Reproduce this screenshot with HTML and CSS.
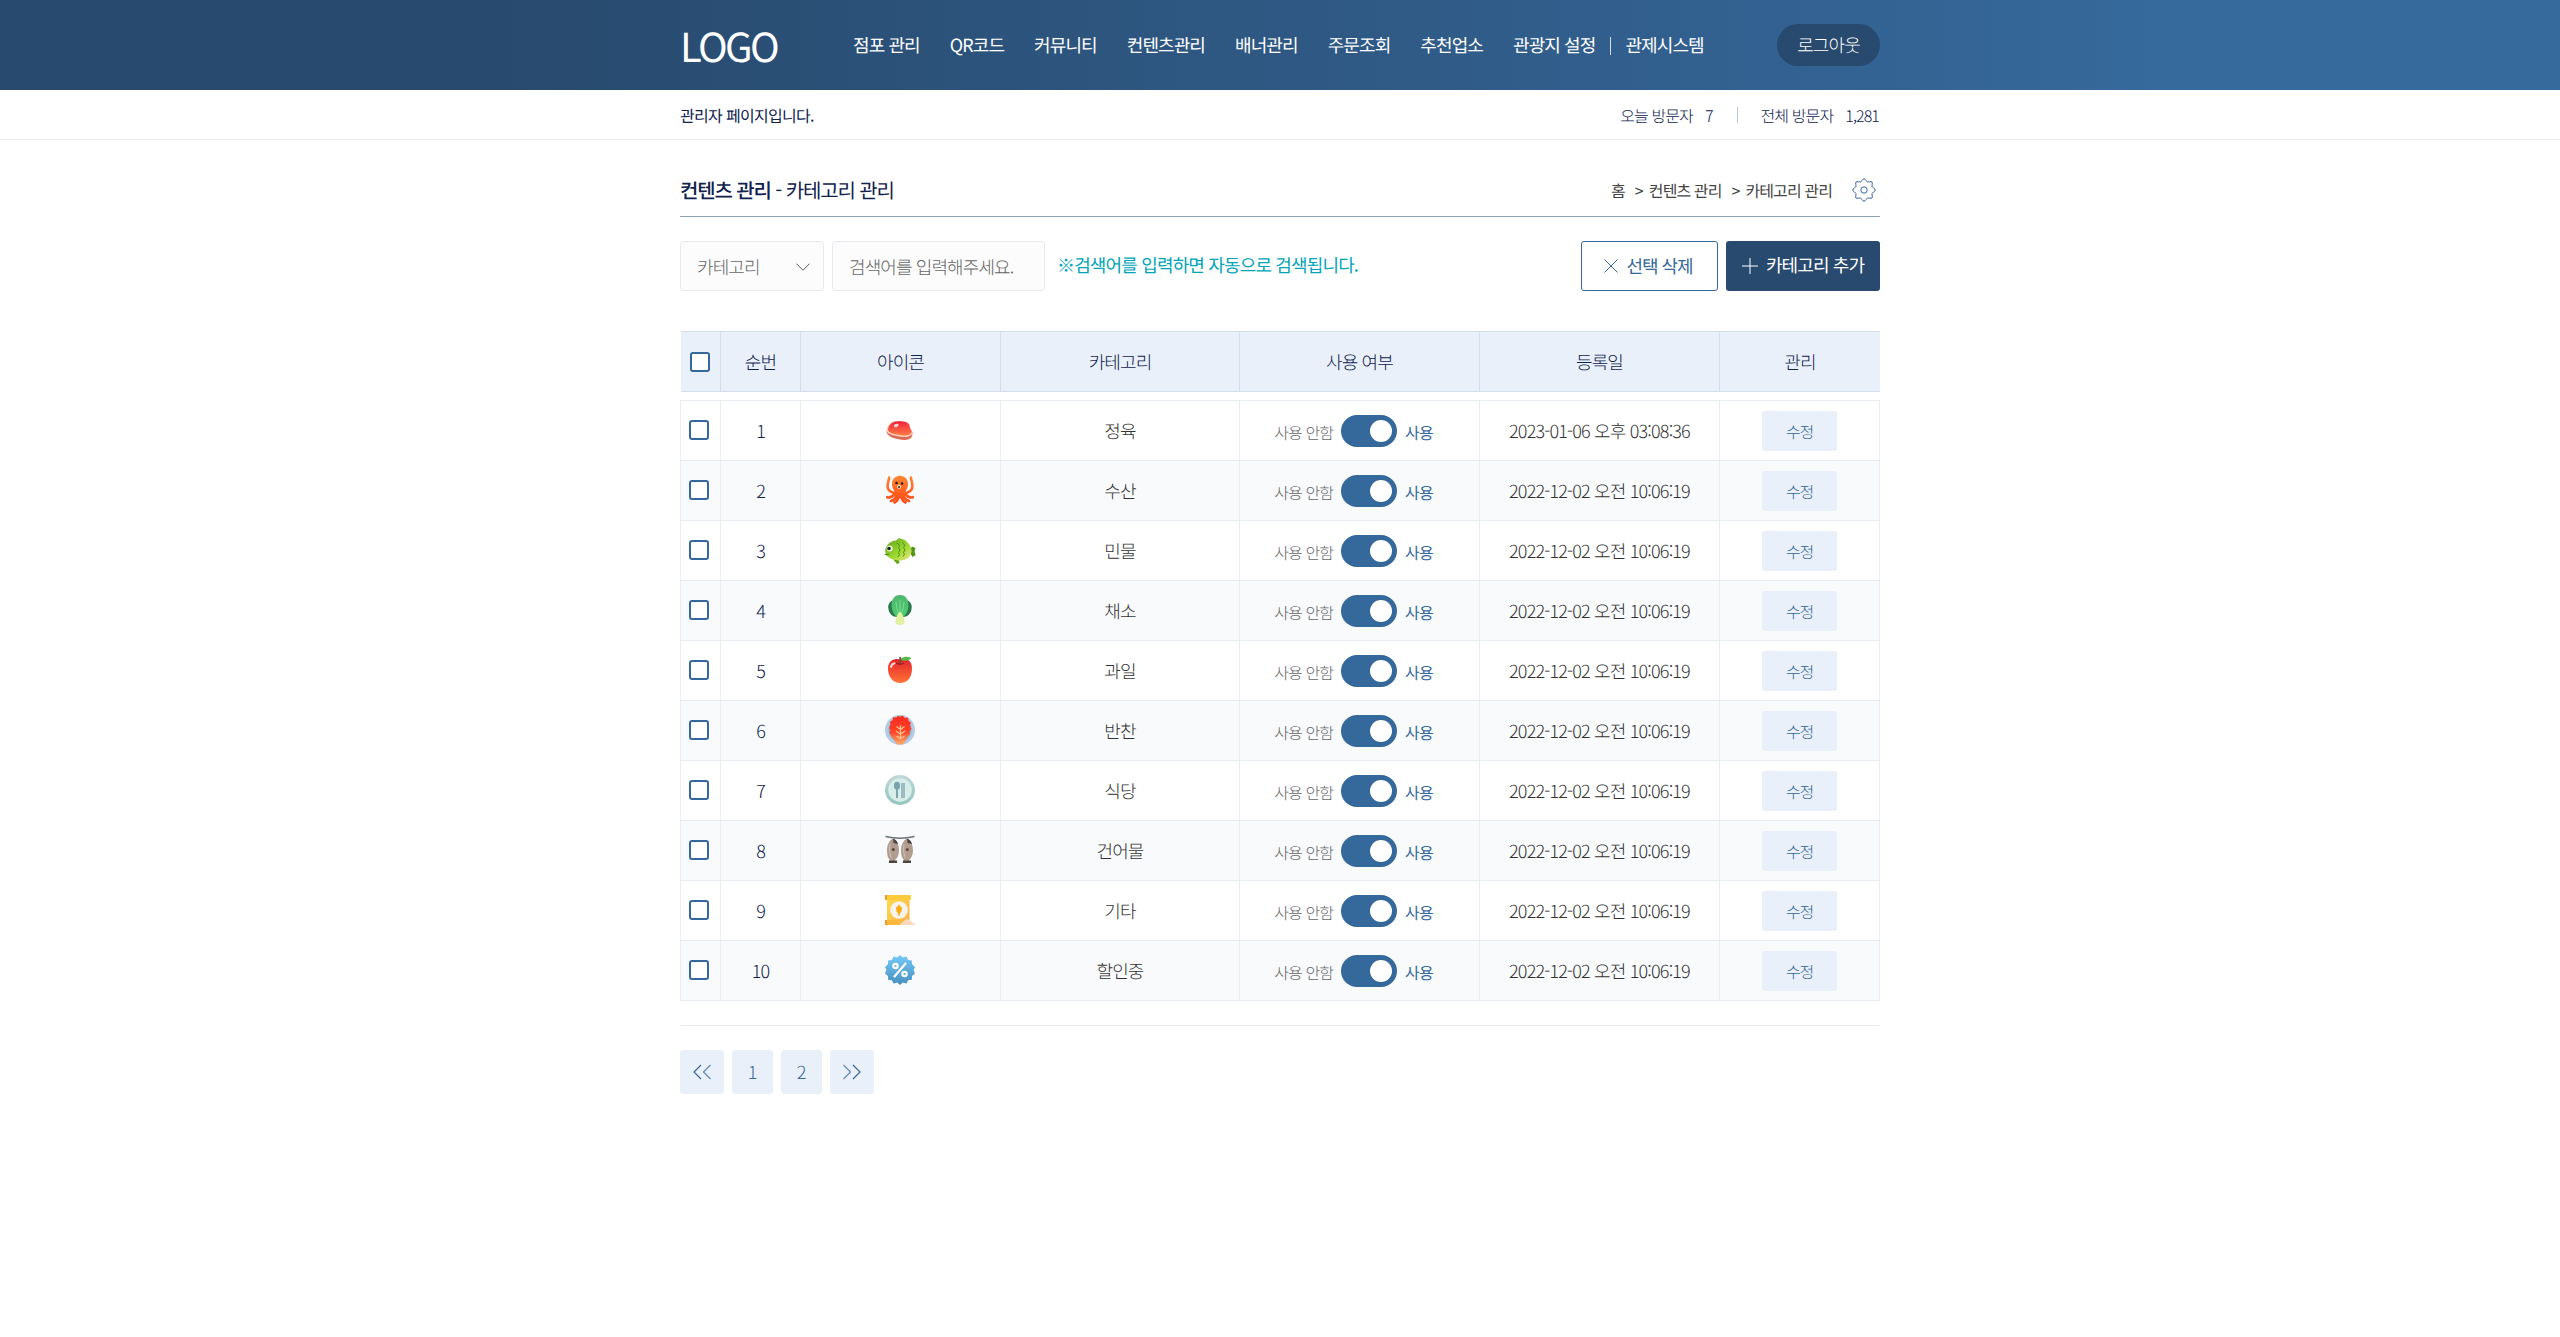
FILE: index.html
```html
<!DOCTYPE html>
<html lang="ko">
<head>
<meta charset="utf-8">
<title>카테고리 관리</title>
<link rel="stylesheet" href="styles.css">
</head>
<body>
<svg class="defs" aria-hidden="true">
  <defs>
    <linearGradient id="g-red" x1="0" y1="0" x2="0" y2="1"><stop offset="0" stop-color="#ef233c"/><stop offset="1" stop-color="#ff7a45"/></linearGradient>
    <linearGradient id="g-orange" x1="0" y1="0" x2="0" y2="30" gradientUnits="userSpaceOnUse"><stop offset="0" stop-color="#ff8a35"/><stop offset="1" stop-color="#ff4312"/></linearGradient>
    <linearGradient id="g-lime" x1="0" y1="0" x2="1" y2="1"><stop offset="0" stop-color="#5c9d18"/><stop offset=".6" stop-color="#9edb32"/><stop offset="1" stop-color="#f5e58a"/></linearGradient>
    <linearGradient id="g-green" x1="0" y1="0" x2="0" y2="1"><stop offset="0" stop-color="#4eb86e"/><stop offset="1" stop-color="#52cb72"/></linearGradient>
    <linearGradient id="g-apple" x1="0" y1="0" x2="0" y2="1"><stop offset="0" stop-color="#e3242b"/><stop offset="1" stop-color="#ff7336"/></linearGradient>
    <linearGradient id="g-dish" x1="0" y1="0" x2="0" y2="1"><stop offset="0" stop-color="#fb2b20"/><stop offset=".55" stop-color="#ff4226"/><stop offset="1" stop-color="#ffae6a"/></linearGradient>
    <linearGradient id="g-plate" x1="0" y1="0" x2="0" y2="1"><stop offset="0" stop-color="#c0d9d7"/><stop offset="1" stop-color="#94c4bd"/></linearGradient>
    <linearGradient id="g-bag" x1="0" y1="0" x2="1" y2="1"><stop offset="0" stop-color="#ffdc4a"/><stop offset="1" stop-color="#fdb04a"/></linearGradient>
    <linearGradient id="g-blue" x1="0" y1="0" x2="0" y2="1"><stop offset="0" stop-color="#75c9fa"/><stop offset="1" stop-color="#458fbd"/></linearGradient>
  </defs>
</svg>

<header class="header">
  <div class="wrap header__inner">
    <a class="logo">LOGO</a>
    <nav class="nav">
      <a>점포 관리</a><a>QR코드</a><a>커뮤니티</a><a>컨텐츠관리</a><a>배너관리</a><a>주문조회</a><a>추천업소</a><a>관광지 설정</a><a class="nav__last">관제시스템</a>
    </nav>
    <button class="logout">로그아웃</button>
  </div>
</header>

<div class="infobar">
  <div class="wrap infobar__inner">
    <p class="infobar__msg">관리자 페이지입니다.</p>
    <dl class="visits">
      <dt>오늘 방문자</dt><dd>7</dd>
      <dt class="visits__total">전체 방문자</dt><dd>1,281</dd>
    </dl>
  </div>
</div>

<main class="wrap">
  <div class="title">
    <h1><b>컨텐츠 관리</b> - 카테고리 관리</h1>
    <div class="crumbs"><span>홈</span><i>&gt;</i><span>컨텐츠 관리</span><i>&gt;</i><span>카테고리 관리</span>
      <svg class="gear" viewBox="-12 -12 24 24"><path d="M-1.870-9.620Q0-13 1.870-9.620Q3.060-7.390 5.480-8.120Q9.190-9.190 8.120-5.480Q7.390-3.060 9.620-1.870Q13 0 9.620 1.870Q7.390 3.060 8.120 5.480Q9.190 9.190 5.480 8.120Q3.060 7.390 1.870 9.620Q0 13-1.870 9.620Q-3.060 7.390-5.480 8.120Q-9.190 9.190-8.120 5.480Q-7.390 3.060-9.620 1.870Q-13 0-9.620-1.870Q-7.390-3.060-8.120-5.480Q-9.190-9.190-5.480-8.120Q-3.060-7.390-1.870-9.620Z"/><circle r="3.200"/></svg>
    </div>
  </div>

  <div class="tools">
    <div class="select">카테고리<svg viewBox="0 0 14 8"><path d="M.5.7 7 7.200 13.500.7"/></svg></div>
    <input class="search" placeholder="검색어를 입력해주세요.">
    <p class="hint">※검색어를 입력하면 자동으로 검색됩니다.</p>
    <button class="btn btn--line"><svg viewBox="0 0 14 14"><path d="M.5.5l13 13M13.500.5l-13 13"/></svg>선택 삭제</button>
    <button class="btn btn--fill"><svg viewBox="0 0 16 16"><path d="M8 0v16M0 8h16"/></svg>카테고리 추가</button>
  </div>

  <section class="table">
    <div class="row row--head">
      <div><span class="check"></span></div><div>순번</div><div>아이콘</div><div>카테고리</div><div>사용 여부</div><div>등록일</div><div>관리</div>
    </div>
    <div class="table__body">
      <div class="row"><div><span class="check"></span></div><div class="num">1</div><div>
        <svg class="icon" viewBox="0 0 30 30"><path d="M1.600 16.500C2 12 5 6 13.500 6c8 0 11.500 2 11.700 6.500.1 2 2.500 3 2.300 6.500-.2 4-3 6-8 5.900C12 24.700 1.500 22 1.600 16.500z" fill="#d96a58"/><path d="M1.700 15.500C2.500 11 5.500 6 13.500 6c8 0 11.500 2 11.700 6.500.1 2 2.400 2.700 2.200 5-.3 3-3.500 4.700-8 4.500C12 21.700 1.500 19.500 1.700 15.500z" fill="#ffd0bc"/><path d="M3 14.500C3.500 10.500 6.500 6.200 13.500 6.200c7.500 0 11 2 11.200 6 .1 2.200 2.200 3 1.900 4.800-.4 2.500-3.600 3.600-7.600 3.400C12 20 2.800 18.300 3 14.500z" fill="url(#g-red)"/><ellipse cx="11.200" cy="10.500" rx="2.500" ry="1.500" fill="#ffd5d8" transform="rotate(-20 11.200 10.500)"/></svg>
      </div><div>정육</div><div class="use"><span>사용 안함</span><i></i><b>사용</b></div><div class="date">2023-01-06 오후 03:08:36</div><div><button class="edit">수정</button></div></div>

      <div class="row"><div><span class="check"></span></div><div class="num">2</div><div>
        <svg class="icon" viewBox="0 0 30 30"><g fill="none" stroke="url(#g-orange)" stroke-width="2.600" stroke-linecap="round"><path d="M4.200 2.500C3.500 7 1.200 11 3.500 14.500S8 17 10 19"/><path d="M25.800 2.500c.7 4.500 3 8.500.7 12S22 17 20 19"/><path d="M10 19c-3 3-5 4.500-7.800 3.200M20 19c3 3 5 4.500 7.800 3.200M12 20c-1 3-2.500 5-6 6M18 20c1 3 2.500 5 6 6M13.500 21c0 3-1 5-4 6.500M16.500 21c0 3 1 5 4 6.500"/></g><path d="M15 .8c5 0 8 3.800 8 8 0 5-2.500 6.500-2.700 10-.2 3-2 4.700-5.300 4.700s-5.100-1.700-5.300-4.700C9.500 15.300 7 13.800 7 8.800c0-4.200 3-8 8-8z" fill="url(#g-orange)"/><circle cx="11.500" cy="8" r="1.300" fill="#2b1a16"/><circle cx="17" cy="8.500" r="1.300" fill="#2b1a16"/><circle cx="14" cy="11.800" r="2" fill="#ffe7dc"/><circle cx="14" cy="12" r="1.100" fill="#3a2420"/></svg>
      </div><div>수산</div><div class="use"><span>사용 안함</span><i></i><b>사용</b></div><div class="date">2022-12-02 오전 10:06:19</div><div><button class="edit">수정</button></div></div>

      <div class="row"><div><span class="check"></span></div><div class="num">3</div><div>
        <svg class="icon" viewBox="0 0 30 30"><path d="M24 16l3-4.500 3.500 1.500-1 3.500 1.200 3.500-3.200 2z" fill="#4f9616"/><path d="M8 21l1 4.500 3 3.500 2.500-1-1-6z" fill="#63a51c"/><path d="M0 15.500C1.500 9 6 6 11 5.500l3-2.500 2.500 1 2 .5 2 1 2 2C25 10 26.500 13 26.500 16c0 5-4 9.500-12 9.500C8 25.500 3.500 22.500 1 20z" fill="url(#g-lime)"/><circle cx="4.700" cy="13.500" r="3" fill="#e9f2dc"/><circle cx="4" cy="13.500" r="1.800" fill="#1e2a20"/><path d="M0 19.500h4" stroke="#52851a"/><g fill="none" stroke="#4c8a16" stroke-width="1"><path d="M11.500 8q4.500 2 2 4.500 3 2.500 0 5 2.500 2.500-1 4.500"/><path d="M17 7.500q4 2.500 1.500 5 3 2.500 0 5 2 2-.5 4"/></g></svg>
      </div><div>민물</div><div class="use"><span>사용 안함</span><i></i><b>사용</b></div><div class="date">2022-12-02 오전 10:06:19</div><div><button class="edit">수정</button></div></div>

      <div class="row"><div><span class="check"></span></div><div class="num">4</div><div>
        <svg class="icon" viewBox="0 0 30 30"><path d="M9 5C4.500 6 2.500 10 3.500 14c.5 4.500 4 8 9 8h5c5 0 8.500-3.500 9-8 1-4-1-8-5.500-9z" fill="#26794b"/><path d="M15 0c6 0 8.500 5 8.500 10S21 21 17 22h-4C9 21 6.500 15 6.500 10S9 0 15 0z" fill="url(#g-green)"/><path d="M15 17c2 0 2.500 3 3.500 5.500 1.500 3 2.500 7.500-3.500 7.500s-5-4.500-3.500-7.500C12.500 20 13 17 15 17z" fill="#e0efa0"/><path d="M15 5v12M11 7q0 6 2.500 11M19 7q0 6-2.500 11" stroke="#80dd94" stroke-width=".9" fill="none"/></svg>
      </div><div>채소</div><div class="use"><span>사용 안함</span><i></i><b>사용</b></div><div class="date">2022-12-02 오전 10:06:19</div><div><button class="edit">수정</button></div></div>

      <div class="row"><div><span class="check"></span></div><div class="num">5</div><div>
        <svg class="icon" viewBox="0 0 30 30"><path d="M15 4.500c3-1.500 12-1.500 12 9S21 28 15 28 3 23 3 13.500s9-10.500 12-9z" fill="url(#g-apple)"/><path d="M11 8q4.500 2.500 8 0" stroke="#a5211c" stroke-width="1.500" fill="none"/><path d="M15.200 9V2" stroke="#70483a" stroke-width="1.700"/><path d="M15.500 4.500C17 1.500 22 .8 26.500 3c-2.500 3-7.500 3.500-11 1.500z" fill="#5db84c"/><path d="M6 12q.5-3 3.500-3.700" stroke="#ffd3d0" stroke-width="2" stroke-linecap="round" fill="none"/></svg>
      </div><div>과일</div><div class="use"><span>사용 안함</span><i></i><b>사용</b></div><div class="date">2022-12-02 오전 10:06:19</div><div><button class="edit">수정</button></div></div>

      <div class="row"><div><span class="check"></span></div><div class="num">6</div><div>
        <svg class="icon" viewBox="0 0 30 30"><circle cx="15" cy="15" r="15" fill="#b3cbe4"/><circle cx="15" cy="15" r="11.500" fill="#95acc7"/><path d="M15 1.500l3-.8 1.500 2 3.500 0 .5 3 2.500 2-1 3 1.500 3-2 2.500.5 3-2.500 2-1.500 3.500-3 4.800h-6l-3-4.800-2.500-3-1.500-3 .5-3-1.500-3 1.500-3-.5-3 2.500-1.500.5-3 3.500.3 1-1.500z" fill="url(#g-dish)"/><path d="M15.500 10v14M11.500 11.500l4 3 4-3M11 16l4.500 3 4.500-3M11.500 21l4 2.500 4-2.500" stroke="#ffc38e" stroke-width="1.300" fill="none"/><circle cx="5.500" cy="17.500" r="1" fill="#e33b2e"/></svg>
      </div><div>반찬</div><div class="use"><span>사용 안함</span><i></i><b>사용</b></div><div class="date">2022-12-02 오전 10:06:19</div><div><button class="edit">수정</button></div></div>

      <div class="row"><div><span class="check"></span></div><div class="num">7</div><div>
        <svg class="icon" viewBox="0 0 30 30"><circle cx="15" cy="15" r="15" fill="url(#g-plate)"/><circle cx="15" cy="15" r="11.800" fill="#d8eeeb"/><ellipse cx="12" cy="10.700" rx="3.100" ry="3.900" fill="#7ba3ab"/><path d="M11 13h2v10h-2z" fill="#7ba3ab"/><path d="M16 8h4v15h-4z" fill="#9dbbc2"/></svg>
      </div><div>식당</div><div class="use"><span>사용 안함</span><i></i><b>사용</b></div><div class="date">2022-12-02 오전 10:06:19</div><div><button class="edit">수정</button></div></div>

      <div class="row"><div><span class="check"></span></div><div class="num">8</div><div>
        <svg class="icon" viewBox="0 0 30 30"><path d="M.5 1.500Q15 5 29.500 1.500" stroke="#6c7378" stroke-width="1.700" fill="none"/><g id="dried"><path d="M8 3.500c3 1.500 6 5.500 6 12 0 4.500-2 8-4 9.500l1.500 3h-8l1.500-3C3 23.500 2 20 2 15.500 2 9 5 5 8 3.500z" fill="#b09d90"/><path d="M8 3.500c3 1 4.500 3 5 5.500l-4.500-1zM4 25.500h8v2.500H4z" fill="#4e443e"/><path d="M5 9q-1.500 6 1 14" stroke="#cfc2b8" fill="none"/><circle cx="8.300" cy="14.500" r="1.500" fill="#57483f"/></g><use href="#dried" x="14"/></svg>
      </div><div>건어물</div><div class="use"><span>사용 안함</span><i></i><b>사용</b></div><div class="date">2022-12-02 오전 10:06:19</div><div><button class="edit">수정</button></div></div>

      <div class="row"><div><span class="check"></span></div><div class="num">9</div><div>
        <svg class="icon" viewBox="0 0 30 30"><path d="M2 3h22.500v25H2z" fill="url(#g-bag)"/><rect y="0" width="26" height="5" rx="1" fill="#fccb3c"/><rect y="25" width="23" height="5" rx="1" fill="#fdb73d"/><path d="M0 0h2v5H0zM0 25h2v5H0z" fill="#f29a25"/><circle cx="14" cy="15" r="8.800" fill="#f6f3ea"/><path d="M14 9.500l1.500 2 1.500 1-.5 4-1.700 2v2h-1.600v-2l-1.700-2-.5-4 1.500-1z" fill="#f9ab14"/><path d="M14.500 30c1.500-2.500 4-3 5.500-5.200 1.500-1.300 3-.8 4.500.7 2 1.500 4.500 2 6 4.500z" fill="#fbd9bd"/></svg>
      </div><div>기타</div><div class="use"><span>사용 안함</span><i></i><b>사용</b></div><div class="date">2022-12-02 오전 10:06:19</div><div><button class="edit">수정</button></div></div>

      <div class="row"><div><span class="check"></span></div><div class="num">10</div><div>
        <svg class="icon" viewBox="0 0 30 30"><path d="M15 0l2.800 2.500 3.700-1 1.600 3.400 3.800.6.100 3.800L30 12l-1.400 3 1.400 3.500-3 2.400-.1 3.800-3.800.6-1.600 3.200-3.700-1L15 30l-2.800-2.500-3.700 1-1.600-3.200-3.800-.6L3 20.900 0 18.500 1.400 15 0 12l3-2.700.1-3.800 3.800-.6 1.600-3.400 3.700 1z" fill="url(#g-blue)"/><g fill="none" stroke="#fff" stroke-width="2.200"><circle cx="10.500" cy="11" r="2.200"/><circle cx="19.500" cy="19" r="2.200"/><path d="M20.500 8.500l-11 13" stroke-linecap="round"/></g></svg>
      </div><div>할인중</div><div class="use"><span>사용 안함</span><i></i><b>사용</b></div><div class="date">2022-12-02 오전 10:06:19</div><div><button class="edit">수정</button></div></div>
    </div>
  </section>

  <nav class="pager">
    <a class="pager__arrow"><svg viewBox="0 0 18 16"><path d="M8 1 1 8l7 7"/><path class="pale" d="M17.500 1l-7 7 7 7"/></svg></a>
    <a>1</a><a>2</a>
    <a class="pager__arrow"><svg viewBox="0 0 18 16"><path class="pale" d="M.5 1l7 7-7 7"/><path d="M10 1l7 7-7 7"/></svg></a>
  </nav>
</main>
</body>
</html>
```
FILE: styles.css
```css
* { box-sizing: border-box; margin: 0; padding: 0; }
body, button, input {
  font-family: "Noto Sans CJK KR", "Noto Sans KR", sans-serif;
  font-size: 18px;
  font-weight: 300;
  letter-spacing: -0.05em;
  text-rendering: geometricPrecision;
}
body { background: #fff; color: #333; line-height: 1.5; }
button { border: 0; cursor: pointer; }
i { font-style: normal; }
.defs { display: block; width: 0; height: 0; }
.wrap { width: 1200px; margin: 0 auto; }

.header { height: 90px; background: linear-gradient(to right, #284a6e 20%, #36699c 85%); }
.header__inner { display: flex; align-items: center; height: 100%; }
.logo { width: 173px; color: #fff; font-size: 40px; font-weight: 400; line-height: 1; letter-spacing: -0.065em; }
.nav { display: flex; gap: 30px; color: #fff; font-weight: 400; white-space: nowrap; }
.nav__last { display: flex; align-items: center; margin-left: -15px; }
.nav__last::before { content: ""; width: 1px; height: 18px; margin: 2px 14px 0 0; background: #d5dfe9; }
.logout { width: 103px; height: 42px; margin-left: auto; border-radius: 21px; background: #284a6e; color: #fff; }

.infobar { height: 50px; border-bottom: 1px solid #e9ebee; font-size: 16px; color: #10224e; }
.infobar__inner { display: flex; align-items: center; justify-content: space-between; height: 100%; }
.infobar__msg { padding-top: 1px; font-weight: 400; letter-spacing: -0.043em; }
.visits { display: flex; align-items: center; margin-right: 1px; }
.visits dd { margin-left: 12px; }
.visits__total { display: flex; align-items: center; }
.visits__total::before { content: ""; width: 1px; height: 16px; margin: 0 23px 0 24px; background: #b8c4d6; }

.title { display: flex; align-items: center; justify-content: space-between; height: 77px; padding-top: 23px; border-bottom: 1px solid #8fa3b8; }
.title h1 { font-size: 20px; font-weight: 400; color: #10224e; letter-spacing: -0.056em; }
.title h1 b { font-weight: 500; }
.crumbs { display: flex; align-items: center; font-size: 16px; font-weight: 400; color: #444; }
.crumbs i { margin: 0 6px 0 10px; }
.gear { width: 24px; height: 24px; margin: 0 4px 0 20px; fill: none; stroke: #35689b; stroke-width: 1; stroke-linejoin: round; }

.tools { display: flex; height: 50px; margin-top: 24px; }
.select, .search { border: 1px solid #e8ebf1; border-radius: 3px; background: #fcfcfc; color: #666; }
.select { display: flex; align-items: center; justify-content: space-between; width: 144px; padding: 2px 13px 0 16px; }
.select svg { width: 14px; height: 8px; margin-bottom: 1px; fill: none; stroke: #555; }
.search { width: 213px; margin-left: 8px; padding: 2px 0 0 16px; }
.search::placeholder { color: #666; opacity: 1; }
.hint { align-self: center; margin: -1px 0 0 12px; color: #00a5b8; font-weight: 400; letter-spacing: -0.047em; }
.btn { display: flex; align-items: center; justify-content: center; border-radius: 3px; font-weight: 400; }
.btn svg { fill: none; stroke: currentColor; }
.btn--line { width: 137px; margin-left: auto; padding-right: 3px; border: 1px solid #35689b; background: #fff; color: #35689b; letter-spacing: -0.06em; }
.btn--line svg { width: 14px; height: 14px; margin: 0 9px 0 0; }
.btn--fill { width: 154px; margin-left: 8px; padding-bottom: 2px; background: #284a6e; color: #fff; }
.btn--fill svg { width: 16px; height: 16px; margin: 2px 8px 0 0; }

.table { margin-top: 40px; }
.row { display: grid; grid-template-columns: 40px 80px 200px 239px 240px 240px 161px; height: 60px; }
.row > div { display: flex; align-items: center; justify-content: center; padding-top: 2px; border-left: 1px solid #e8edf2; border-bottom: 1px solid #e8edf2; }
.row > div:last-child { padding-top: 0; border-right: 1px solid #e8edf2; }
.row > div:first-child { padding: 0 3px 1px 0; }
.row--head { height: 61px; margin-left: 1px; grid-template-columns: 39px 80px 200px 239px 240px 240px 161px; border-top: 1px solid #d3deec; background: #e9f0f9; color: #10224e; }
.row--head > div, .row--head > div:last-child { padding-top: 2px; border-color: #d3deec; }
.row--head > div:first-child { padding: 0 2px 0 0; border-left: 0; }
.row--head > div:last-child { border-right: 0; }
.table__body { margin-top: 8px; border-top: 1px solid #e8edf2; }
.table__body .row:nth-child(even) { background: #f8fafc; }
.table__body .row > div:nth-child(3) { padding: 0 2px 1px 0; }
.check { width: 20px; height: 20px; border: 2px solid #35689b; border-radius: 3px; background: #fff; }
.num { color: #10224e; }
.icon { width: 30px; height: 30px; overflow: visible; }
.table__body .row > .use { padding: 0 12px 0 0; font-size: 16px; }
.use span { padding-top: 2px; color: #666; }
.use b { padding-top: 2px; color: #35689b; font-weight: 400; }
.use i { width: 56px; height: 32px; margin: 0 8px; padding: 5px; border-radius: 16px; background: #35689b; }
.use i::before { content: ""; display: block; width: 22px; height: 22px; margin-left: auto; border-radius: 50%; background: #fff; }
.date { letter-spacing: -0.046em; }
.edit { width: 75px; height: 40px; padding-top: 1px; border-radius: 3px; background: #e9f0f9; color: #35689b; font-size: 16px; letter-spacing: -0.08em; }

.pager { display: flex; gap: 8px; margin-top: 24px; padding-top: 24px; border-top: 1px solid #e8ebf1; }
.pager a { display: flex; align-items: center; justify-content: center; width: 41px; height: 44px; padding-right: 1px; border-radius: 3px; background: #e9f0f9; color: #35689b; }
.pager .pager__arrow { width: 44px; padding-right: 0; }
.pager svg { width: 18px; height: 16px; fill: none; stroke: #35689b; stroke-width: 1.200; }
.pager .pale { opacity: .75; }
```
